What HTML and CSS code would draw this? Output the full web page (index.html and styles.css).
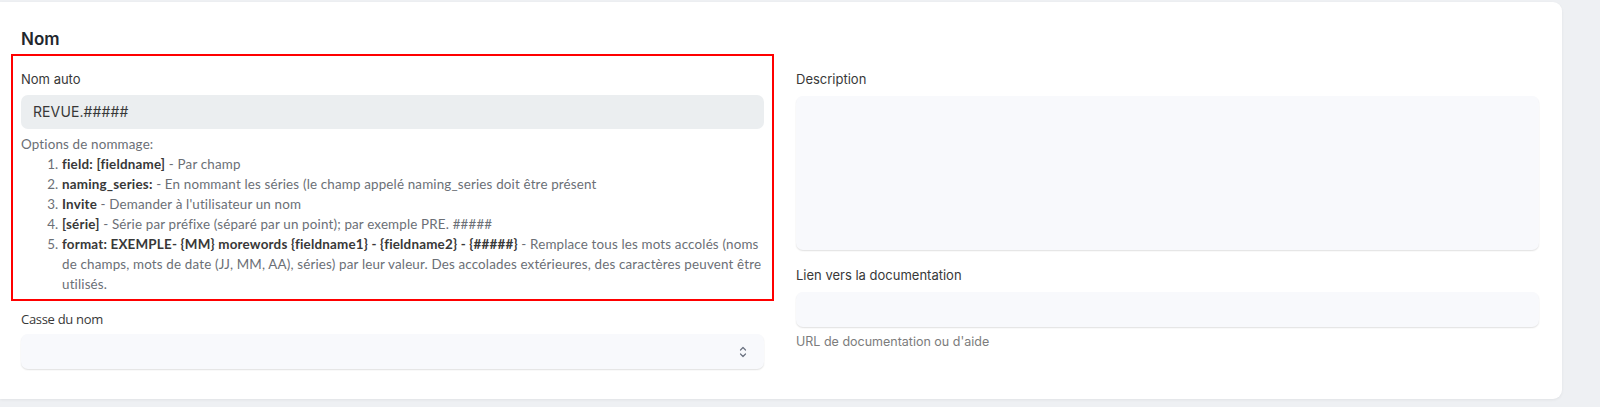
FILE: index.html
```html
<!DOCTYPE html>
<html lang="fr">
<head>
<meta charset="utf-8">
<title>Nom</title>
<link rel="stylesheet" href="styles.css">
</head>
<body>
<div class="card">
  <h2 class="section-title">Nom</h2>
  <div class="grid">
    <div class="col">
      <div class="highlight">
        <div class="field">
          <label class="label">Nom auto</label>
          <div class="input readonly">REVUE.#####</div>
          <div class="help naming">
            <div>Options de nommage:</div>
            <ol>
              <li><b>field: [fieldname]</b> - Par champ</li>
              <li><b>naming_series:</b> - En nommant les séries (le champ appelé naming_series doit être présent</li>
              <li><b>Invite</b> - Demander à l'utilisateur un nom</li>
              <li><b>[série]</b> - Série par préfixe (séparé par un point); par exemple PRE. #####</li>
              <li><b>format: EXEMPLE- {MM} morewords {fieldname1} - {fieldname2} - {#####}</b> - Remplace tous les mots accolés (noms de champs, mots de date (JJ, MM, AA), séries) par leur valeur. Des accolades extérieures, des caractères peuvent être utilisés.</li>
            </ol>
          </div>
        </div>
      </div>
      <div class="field casse">
        <label class="label casse-label">Casse du nom</label>
        <div class="input select">
          <svg class="arrows" width="10" height="16" viewBox="0 0 10 16" fill="none" stroke="#6b7280" stroke-width="1.2" stroke-linecap="round" stroke-linejoin="round"><path d="M2.5 6 L5 3.5 L7.5 6"/><path d="M2.5 10 L5 12.5 L7.5 10"/></svg>
        </div>
      </div>
    </div>
    <div class="col right">
      <div class="field">
        <label class="label">Description</label>
        <div class="input textarea"></div>
      </div>
      <div class="field doc">
        <label class="label">Lien vers la documentation</label>
        <div class="input"></div>
        <div class="help url">URL de documentation ou d'aide</div>
      </div>
    </div>
  </div>
</div>
</body>
</html>
```

FILE: styles.css
```css
* { box-sizing: border-box; }
html, body { margin: 0; padding: 0; }
body {
  background: #eef0f3;
  font-family: "Inter", "Liberation Sans", sans-serif;
  height: 407px;
  overflow: hidden;
}
.card {
  margin-top: 2px;
  width: 1562px;
  height: 397px;
  background: #ffffff;
  border-radius: 0 9px 9px 0;
  box-shadow: 0 1px 3px rgba(0, 0, 0, 0.06);
  padding: 24px 23px 0 21px;
}
.section-title {
  margin: 0;
  font-size: 17px;
  line-height: 26px;
  font-weight: 600;
  color: #1f272e;
  height: 26px;
}
.grid {
  margin-top: 2px;
  display: grid;
  grid-template-columns: 743px 743px;
  column-gap: 32px;
  align-items: start;
}
.highlight {
  margin: 0 -10px;
  border: 2px solid #ff0000;
  padding: 14px 8px 5px 8px;
}
.label {
  display: block;
  font-size: 13px;
  line-height: 18px;
  color: #383838;
  margin-bottom: 7px;
}
.input {
  height: 34px;
  border-radius: 7px;
  background: #f8f9fc;
  box-shadow: 0 1px 1.5px rgba(0, 0, 0, 0.12);
}
.input.readonly {
  background: #ebeef0;
  box-shadow: none;
  font-size: 14px;
  line-height: 34px;
  padding-left: 12px;
  color: #383838;
  letter-spacing: 0.1px;
}
.help {
  font-size: 13px;
  line-height: 20px;
  color: #6b6f76;
}
.naming {
  margin-top: 5px;
  font-family: "Lato", "Liberation Sans", sans-serif;
  font-size: 13.4px;
  letter-spacing: 0.16px;
  font-variant-ligatures: none;
}
.naming ol {
  margin: 0;
  padding-left: 41px;
}
.naming b {
  font-weight: 700;
  color: #383838;
  letter-spacing: 0.2px;
}
.casse { margin-top: 9px; }
.casse-label { margin-bottom: 6px; font-family: "Open Sans", "Liberation Sans", sans-serif; letter-spacing: -0.3px; }
.select {
  height: 35px;
  display: flex;
  align-items: center;
  justify-content: flex-end;
  padding-right: 16px;
}
.right { padding-top: 16px; }
.textarea { height: 154px; margin-top: 8px; }
.right .label { margin-bottom: 0; }
.right .field .input { margin-top: 8px; }
.doc { margin-top: 16px; }
.doc .input { height: 35px; }
.url { margin-top: 6px; line-height: 18px; font-size: 12.5px; color: #7c7c7c; }
```
